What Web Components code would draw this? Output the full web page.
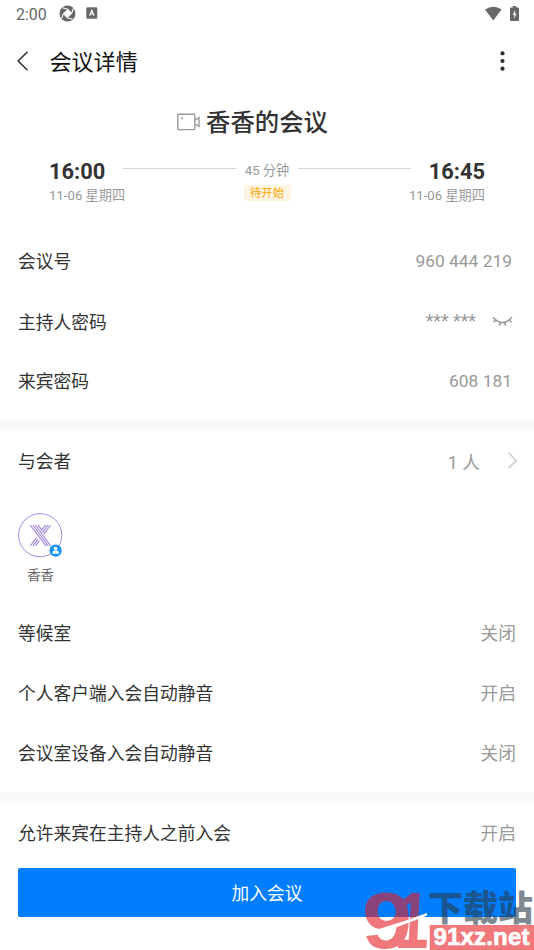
<!DOCTYPE html>
<html lang="zh-CN">
<head>
<meta charset="utf-8">
<title>会议详情</title>
<style>
html,body{margin:0;height:950px;overflow:hidden;background:#fff}
body{font-family:Roboto,"Noto Sans CJK SC",sans-serif;color:#333}
</style>
</head>
<body>
<meeting-page></meeting-page>
<script>
const define = (name, markup) => {
  const t = document.createElement('template');
  t.innerHTML = markup;
  customElements.define(name, class extends HTMLElement {
    constructor() {
      super();
      this.attachShadow({mode: 'open'}).append(t.content.cloneNode(true));
    }
  });
};

define('status-bar', `
<style>
:host{display:flex;align-items:center;height:28px;padding:0 15px 2px 16px;box-sizing:border-box;color:#686868;font-size:16px}
span{width:43px;white-space:nowrap;padding-top:2px}
svg{display:block;flex:none}
.a{margin-left:10px}.w{margin-left:auto}.b{margin-left:8px}
</style>
<span>2:00</span>
<svg width="17" height="17" viewBox="0 0 17 17"><circle cx="8.5" cy="8.5" r="8" fill="#686868"/><path d="M8.8 3.8 13.2 8.2 8.2 13.2 3.8 8.8z" fill="#fff"/><path d="M8.8 4.2 3.5 2.7M12.8 8.2 14.3 3.5M8.2 12.8 13.5 14.3M4.2 8.8 2.7 13.5" stroke="#fff" stroke-width="1.1"/></svg>
<svg class="a" width="12" height="12" viewBox="0 0 12 12"><rect x=".3" y=".3" width="11" height="11.4" rx="1.3" fill="#686868"/><path d="M3.6 8.7 5.8 3.3 8 8.7M4.4 7h2.8" fill="none" stroke="#fff" stroke-width="1.2"/></svg>
<svg class="w" width="17" height="15" viewBox="0 0 17 15"><path d="M0 3.5Q8.3-2 16.6 3.5L8.3 14.4z" fill="#686868"/></svg>
<svg class="b" width="9" height="15" viewBox="0 0 9 15"><path d="M2.7 0h3.6v1.6H8q1 0 1 1V14q0 1-1 1H1q-1 0-1-1V2.6q0-1 1-1h1.7z" fill="#666"/><path d="M5.2 4 2.5 8.8h1.8L3.8 12.8 6.7 7.6H5z" fill="#fff"/></svg>
`);

define('nav-bar', `
<style>
:host{display:flex;align-items:center;height:66px;padding:0 29px 0 17px;box-sizing:border-box;color:#111;font-size:22.1px}
svg{display:block}
.t{margin-left:20.4px;padding-bottom:2px}.m{margin-left:auto}
</style>
<svg width="12" height="20" viewBox="0 0 12 20"><path d="M10.5.8 1.2 10l9.3 9.2" fill="none" stroke="#333" stroke-width="1.6"/></svg>
<span class="t"><slot></slot></span>
<svg class="m" width="5" height="20" viewBox="0 0 5 20"><g fill="#2d2d2d"><circle cx="2.5" cy="2.3" r="2.1"/><circle cx="2.5" cy="10" r="2.1"/><circle cx="2.5" cy="17.7" r="2.1"/></g></svg>
`);

define('meeting-summary', `
<style>
:host{display:block;height:137px}
.title{display:flex;align-items:center;height:54px;padding-left:177px;font-size:24.4px;font-weight:500;color:#333}
.title svg{margin:2px 6px 0 0}.title span{padding-bottom:1px}
.row{display:grid;grid-template-columns:76px minmax(0,1fr) 76px;padding:0 49px;color:#999;font-size:13.2px}
.t{font-size:21.8px;font-weight:700;color:#333;line-height:26px;margin-top:11px}
.d{line-height:18px;margin-top:2px;white-space:nowrap}
.r{display:flex;flex-direction:column;align-items:flex-end}
.mid{display:flex;flex-direction:column;align-items:center}
.dur{display:flex;align-items:center;width:288px;height:18px;margin-top:12px;gap:9px;white-space:nowrap}
.dur:before,.dur:after{content:"";height:1px;background:#d6d6d6;flex:1;margin-top:-2px}
.tag{height:16px;line-height:17px;width:47px;text-align:center;font-size:11.3px;background:#fff3e2;color:#ffa400;border-radius:2px;margin-top:7px}
</style>
<div class="title"><svg width="23" height="18" viewBox="0 0 23 18" fill="none" stroke="#999" stroke-width="1.4"><rect x=".8" y="1.3" width="17" height="15.3" rx="1"/><path d="M18 7.2 22 4.6v8.8L18 11"/><circle cx="5" cy="5.2" r="1" fill="#999" stroke="none"/></svg><span>香香的会议</span></div>
<div class="row">
<div><div class="t">16:00</div><div class="d">11-06 星期四</div></div>
<div class="mid"><div class="dur"><span>45 分钟</span></div><div class="tag">待开始</div></div>
<div class="r"><div class="t">16:45</div><div class="d">11-06 星期四</div></div>
</div>
`);

define('info-row', `
<style>
:host{display:flex;align-items:center;justify-content:space-between;height:60.2px;padding:0 18px 1px;box-sizing:border-box;font-size:17.75px;color:#333}
.l{padding-bottom:var(--lift,0px)}
.v{display:flex;align-items:center;color:#999}
</style>
<span class="l"><slot></slot></span><span class="v"><slot name="value"></slot></span>
`);

define('closed-eye', `
<style>:host{display:block;margin-left:16px}svg{display:block}</style>
<svg width="21" height="12" viewBox="0 0 21 12" fill="none" stroke="#999" stroke-width="1.6"><path d="M1 2.3q9.5 10.5 19 0M4 5 1.6 7.2M8.3 7.2 7.5 10.6M12.7 7.2l.8 3.4M17 5l2.4 2.2"/></svg>
`);

define('chevron-right', `
<style>:host{display:block;margin-left:28px}svg{display:block}</style>
<svg width="9" height="17" viewBox="0 0 9 17" fill="none" stroke="#c8c8c8" stroke-width="1.5"><path d="m.6.8 7.6 7.7-7.6 7.7"/></svg>
`);

define('section-gap', `<style>:host{display:block;height:11px;background:#f9f9f9}</style>`);

define('member-avatar', `
<style>
:host{display:flex;flex-direction:column;align-items:center;width:45px;margin-left:18px;padding-top:21px;height:111px;box-sizing:border-box;font-size:13.3px;color:#666}
svg{display:block;flex:none}
span{line-height:20px;margin-top:8px}
</style>
<svg width="45" height="46" viewBox="0 0 45 46">
<circle cx="22.2" cy="23.2" r="21.6" fill="#fff" stroke="#a58be8" stroke-width="1"/>
<path fill="none" stroke="#9b7cdc" stroke-width="1.1" d="M12.2 13 28 34M14.8 13 30.3 34M17.4 13 32.7 34M20 13 24 18.4M12.2 34l6.2-8.2M14.8 34l5-6.6M17.4 34l4-5.4M32.7 13l-7 9.2M30.1 13l-5.7 7.4M27.5 13l-4.4 5.7"/>
<circle cx="37.6" cy="38.6" r="6.1" fill="#1594f6"/><circle cx="37.6" cy="36.6" r="1.9" fill="#fff"/><path d="M34.5 41.7v-1.2q0-1.8 1.8-1.8H39q1.8 0 1.8 1.8v1.2z" fill="#fff"/>
</svg>
<span><slot></slot></span>
`);

define('join-button', `
<style>
:host{display:block;margin:3.6px 18px 0}
button{display:block;width:100%;height:49px;border:0;border-radius:2px;background:#007eff;color:#fff;font:17.7px Roboto,"Noto Sans CJK SC",sans-serif;padding:0 0 1px}
</style>
<button><slot></slot></button>
`);

define('site-mark', `
<style>:host{position:absolute;left:360px;top:885px;width:174px;height:65px}svg{display:block}</style>
<svg width="174" height="65" viewBox="0 0 174 65">
<g opacity=".6">
<g fill="#e71e23" font-family="Liberation Sans,sans-serif" font-weight="700">
<text transform="translate(2 63) scale(1.14 1)" font-size="79">9</text>
<text transform="translate(34 63) skewX(-3) scale(.77 1)" font-size="80">1</text>
</g>
<text x="68" y="35.5" fill="#2a3a48" font-family="'Noto Sans CJK SC',sans-serif" font-weight="900" font-size="35">下载站</text>
<rect x="69.7" y="40" width="104.3" height="25" fill="#e71e23"/>
</g>
<path d="M17 44.5Q43 37 67 28V30.5Q46 39 30 44.5z" fill="#fff"/>
<text x="73.5" y="60" font-family="Liberation Sans Narrow,Liberation Sans,sans-serif" font-weight="700" font-size="24" textLength="96" lengthAdjust="spacing" fill="#fff" stroke="#fff" stroke-width=".7">91xz.net</text>
</svg>
`);

define('meeting-page', `
<style>:host{display:flex;flex-direction:column;position:relative;width:534px;height:950px;overflow:hidden;background:#fff}
.num{margin-right:4px;font-size:17.4px}
.up{--lift:2px}
.last{height:61px}</style>
<status-bar></status-bar>
<nav-bar>会议详情</nav-bar>
<meeting-summary></meeting-summary>
<info-row class="up">会议号<span slot="value" class="num">960 444 219</span></info-row>
<info-row>主持人密码<span slot="value">*** ***</span><closed-eye slot="value" style="margin-right:3px"></closed-eye></info-row>
<info-row class="up" style="height:68.6px;padding-bottom:9.6px">来宾密码<span slot="value" class="num">608 181</span></info-row>
<section-gap></section-gap>
<info-row class="up">与会者<span slot="value">1 人</span><chevron-right slot="value" style="margin-right:-1px"></chevron-right></info-row>
<member-avatar>香香</member-avatar>
<info-row>等候室<span slot="value">关闭</span></info-row>
<info-row>个人客户端入会自动静音<span slot="value">开启</span></info-row>
<info-row style="height:69.4px;padding-bottom:10px">会议室设备入会自动静音<span slot="value">关闭</span></info-row>
<section-gap></section-gap>
<info-row class="last" style="padding-bottom:2.4px">允许来宾在主持人之前入会<span slot="value">开启</span></info-row>
<join-button>加入会议</join-button>
<site-mark></site-mark>
`);
</script>
</body>
</html>
